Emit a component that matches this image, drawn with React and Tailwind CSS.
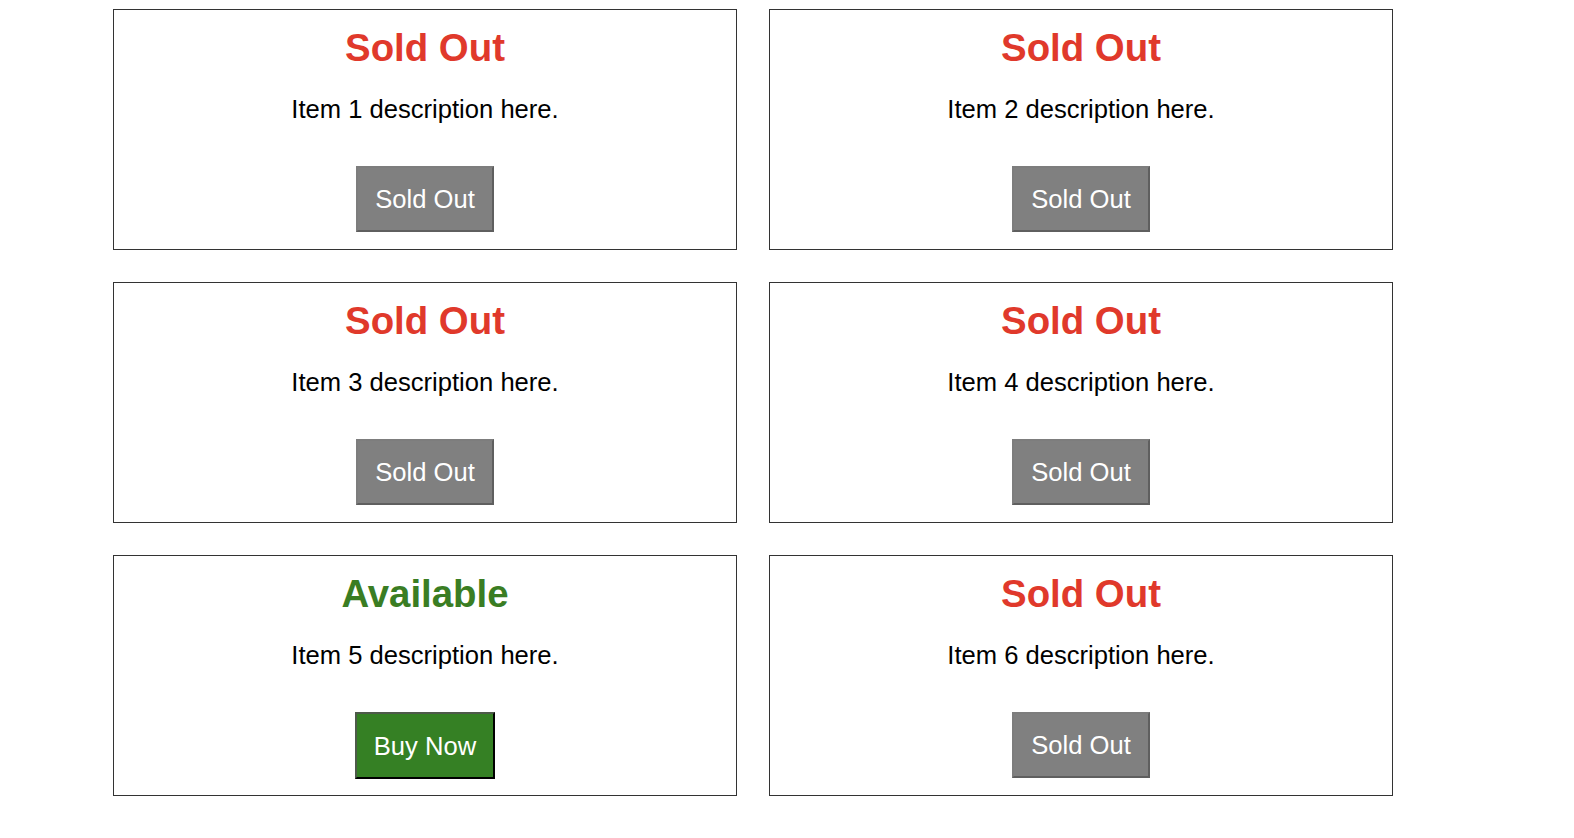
const items = [
  { id: 1, available: false },
  { id: 2, available: false },
  { id: 3, available: false },
  { id: 4, available: false },
  { id: 5, available: true },
  { id: 6, available: false },
];

function ItemCard({ item }) {
  return (
    <div className="w-[624px] h-[241px] border border-[#333] bg-white px-4 pt-4 pb-4 flex flex-col items-center text-center">
      <h2
        className={`text-[38.4px] leading-[43px] font-bold ${
          item.available ? "text-[#3a7d23]" : "text-[#e0392b]"
        }`}
      >
        {item.available ? "Available" : "Sold Out"}
      </h2>
      <p className="mt-[25px] text-[25.6px] leading-[30px] text-black">
        Item {item.id} description here.
      </p>
      {item.available ? (
        <button className="mt-[42px] h-[67px] px-[17px] border-2 border-t-[#4d5a49] border-l-[#4d5a49] border-r-black border-b-black bg-[#358024] text-white text-[25.6px] leading-[30px]">
          Buy Now
        </button>
      ) : (
        <button className="mt-[42px] h-[66px] px-[17px] border-2 border-t-[#7d7d7d] border-l-[#7d7d7d] border-r-[#5f5f5f] border-b-[#5f5f5f] bg-[#808080] text-white text-[25.6px] leading-[30px]">
          Sold Out
        </button>
      )}
    </div>
  );
}

export default function App() {
  return (
    <div className="min-h-screen bg-white pt-[9px] pl-[113px] font-['Liberation_Sans',Arial,sans-serif]">
      <div className="grid grid-cols-[624px_624px] gap-[32px]">
        {items.map((item) => (
          <ItemCard key={item.id} item={item} />
        ))}
      </div>
    </div>
  );
}
